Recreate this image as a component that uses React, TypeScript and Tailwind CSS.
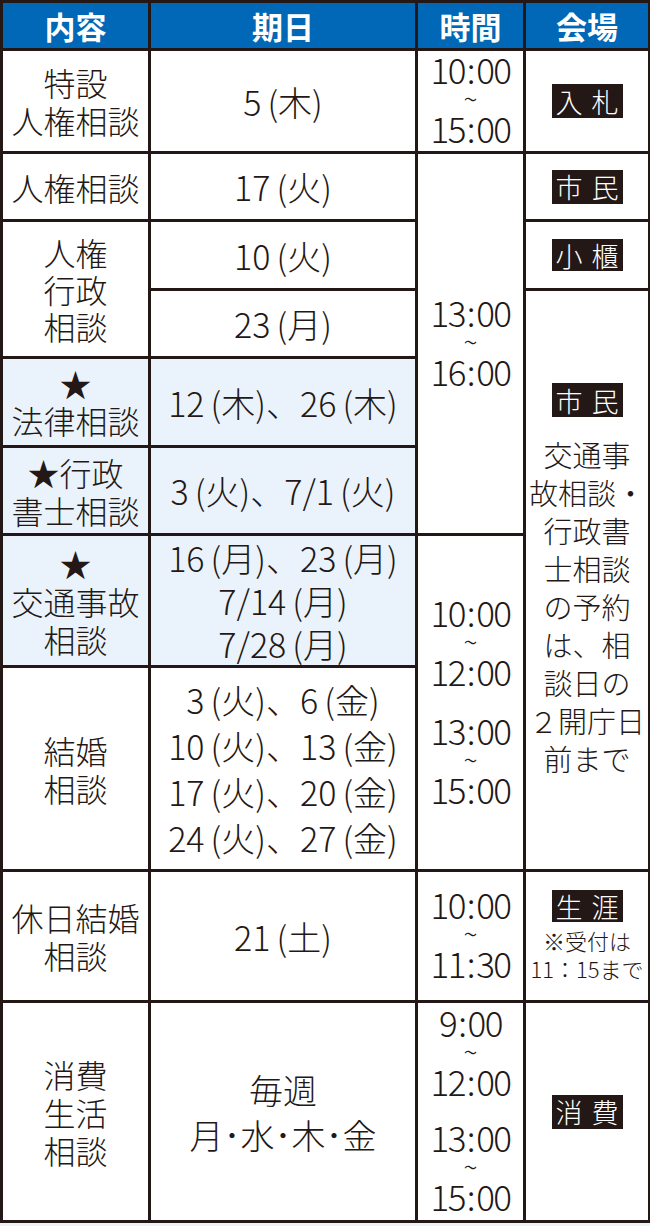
// 相談日程の表
const cell = "flex flex-col items-center justify-center text-center";
const white = "bg-white";
const blue = "bg-[#eaf3fb]";

function Badge({ text, short }: { text: string; short?: boolean }) {
  return (
    <div
      className={`flex w-[71px] items-center justify-center gap-[9px] bg-[#231815] text-[27px] leading-none text-white ${
        short ? "h-[32px]" : "h-[34px]"
      }`}
    >
      {text.split("").map((c) => (
        <span key={c}>{c}</span>
      ))}
    </div>
  );
}

// 時刻は「:」の前後を少しあける
function Clock({ t }: { t: string }) {
  const [h, m] = t.split(":");
  return (
    <div className="text-[35px] leading-[37px] tracking-[-1.5px]">
      {h}
      <span className="mx-[2px]">:</span>
      {m}
    </div>
  );
}

function Time({ from, to }: { from: string; to: string }) {
  return (
    <>
      <Clock t={from} />
      <div className="text-[26px] leading-[22px]">~</div>
      <Clock t={to} />
    </>
  );
}

// 日付と曜日 ( ) の間を少しあける
function Day({ d, w }: { d: string; w: string }) {
  return (
    <span>
      {d}
      <span className="ml-[6px]">(</span>
      {w})
    </span>
  );
}

export default function App() {
  return (
    <div className="h-[1226px] w-[650px] bg-[#eaf3fb] font-['Noto_Sans_CJK_JP',sans-serif] font-light text-[#231815]">
      <div className="grid grid-cols-[145px_264px_105px_122px] grid-rows-[45px_100px_65px_66px_65px_86px_85px_129px_201px_128px_217px] gap-[3px] bg-[#231815] pt-[3px] pb-[3px] pl-[3px] pr-[2px]">
        {/* 見出し */}
        {["内容", "期日", "時間", "会場"].map((h) => (
          <div
            key={h}
            className="flex items-center justify-center bg-[#0068b6] text-[31px] font-bold leading-none text-white"
          >
            {h}
          </div>
        ))}

        {/* 内容 */}
        <div className={`${cell} ${white} col-start-1 row-start-2 text-[32px] leading-[38px]`}>
          <div>特設</div>
          <div>人権相談</div>
        </div>
        <div className={`${cell} ${white} col-start-1 row-start-3 text-[32px] leading-[38px]`}>
          人権相談
        </div>
        <div className={`${cell} ${white} col-start-1 row-start-4 row-span-2 text-[32px] leading-[37px]`}>
          <div>人権</div>
          <div>行政</div>
          <div>相談</div>
        </div>
        <div className={`${cell} ${blue} col-start-1 row-start-6 text-[32px] leading-[37px]`}>
          <div>★</div>
          <div>法律相談</div>
        </div>
        <div className={`${cell} ${blue} col-start-1 row-start-7 text-[32px] leading-[38px]`}>
          <div>★行政</div>
          <div>書士相談</div>
        </div>
        <div className={`${cell} ${blue} col-start-1 row-start-8 text-[32px] leading-[38px]`}>
          <div>★</div>
          <div>交通事故</div>
          <div>相談</div>
        </div>
        <div className={`${cell} ${white} col-start-1 row-start-9 text-[32px] leading-[38px]`}>
          <div>結婚</div>
          <div>相談</div>
        </div>
        <div className={`${cell} ${white} col-start-1 row-start-10 text-[32px] leading-[38px]`}>
          <div>休日結婚</div>
          <div>相談</div>
        </div>
        <div className={`${cell} ${white} col-start-1 row-start-11 text-[32px] leading-[38px]`}>
          <div>消費</div>
          <div>生活</div>
          <div>相談</div>
        </div>

        {/* 期日 */}
        <div className={`${cell} ${white} col-start-2 row-start-2 text-[34px]`}>
          <Day d="5" w="木" />
        </div>
        <div className={`${cell} ${white} col-start-2 row-start-3 text-[34px]`}>
          <Day d="17" w="火" />
        </div>
        <div className={`${cell} ${white} col-start-2 row-start-4 text-[34px]`}>
          <Day d="10" w="火" />
        </div>
        <div className={`${cell} ${white} col-start-2 row-start-5 text-[34px]`}>
          <Day d="23" w="月" />
        </div>
        <div className={`${cell} ${blue} col-start-2 row-start-6 text-[34px]`}>
          <div>
            <Day d="12" w="木" />、<Day d="26" w="木" />
          </div>
        </div>
        <div className={`${cell} ${blue} col-start-2 row-start-7 text-[34px]`}>
          <div>
            <Day d="3" w="火" />、<Day d="7/1" w="火" />
          </div>
        </div>
        <div className={`${cell} ${blue} col-start-2 row-start-8 text-[34px] leading-[43px]`}>
          <div>
            <Day d="16" w="月" />、<Day d="23" w="月" />
          </div>
          <div>
            <Day d="7/14" w="月" />
          </div>
          <div>
            <Day d="7/28" w="月" />
          </div>
        </div>
        <div className={`${cell} ${white} col-start-2 row-start-9 text-[34px] leading-[46px]`}>
          <div>
            <Day d="3" w="火" />、<Day d="6" w="金" />
          </div>
          <div>
            <Day d="10" w="火" />、<Day d="13" w="金" />
          </div>
          <div>
            <Day d="17" w="火" />、<Day d="20" w="金" />
          </div>
          <div>
            <Day d="24" w="火" />、<Day d="27" w="金" />
          </div>
        </div>
        <div className={`${cell} ${white} col-start-2 row-start-10 text-[34px]`}>
          <Day d="21" w="土" />
        </div>
        <div className={`${cell} ${white} col-start-2 row-start-11 text-[34px] leading-[45px]`}>
          <div>毎週</div>
          <div>月･水･木･金</div>
        </div>

        {/* 時間 */}
        <div className={`${cell} ${white} col-start-3 row-start-2 pb-[6px]`}>
          <Time from="10:00" to="15:00" />
        </div>
        <div className={`${cell} ${white} col-start-3 row-start-3 row-span-5 pb-[6px]`}>
          <Time from="13:00" to="16:00" />
        </div>
        <div className={`${cell} ${white} col-start-3 row-start-8 row-span-2 pb-[6px]`}>
          <Time from="10:00" to="12:00" />
          <div className="h-[22px]" />
          <Time from="13:00" to="15:00" />
        </div>
        <div className={`${cell} ${white} col-start-3 row-start-10 pb-[6px]`}>
          <Time from="10:00" to="11:30" />
        </div>
        <div className={`${cell} ${white} col-start-3 row-start-11 pb-[6px]`}>
          <Time from="9:00" to="12:00" />
          <div className="h-[22px]" />
          <Time from="13:00" to="15:00" />
        </div>

        {/* 会場 */}
        <div className={`${cell} ${white} col-start-4 row-start-2`}>
          <Badge text="入札" />
        </div>
        <div className={`${cell} ${white} col-start-4 row-start-3`}>
          <Badge text="市民" />
        </div>
        <div className={`${cell} ${white} col-start-4 row-start-4`}>
          <Badge text="小櫃" short />
        </div>
        <div className={`${cell} ${white} col-start-4 row-start-5 row-span-5`}>
          <Badge text="市民" />
          <div className="mt-[18px] text-[29px] leading-[38px]">
            <div>交通事</div>
            <div>故相談・</div>
            <div>行政書</div>
            <div>士相談</div>
            <div>の予約</div>
            <div>は、相</div>
            <div>談日の</div>
            <div>２開庁日</div>
            <div>前まで</div>
          </div>
        </div>
        <div className={`${cell} ${white} col-start-4 row-start-10`}>
          <Badge text="生涯" short />
          <div className="mt-[4px] text-[22px] leading-[28px]">
            <div>※受付は</div>
            <div>11：15まで</div>
          </div>
        </div>
        <div className={`${cell} ${white} col-start-4 row-start-11`}>
          <Badge text="消費" />
        </div>
      </div>
    </div>
  );
}
